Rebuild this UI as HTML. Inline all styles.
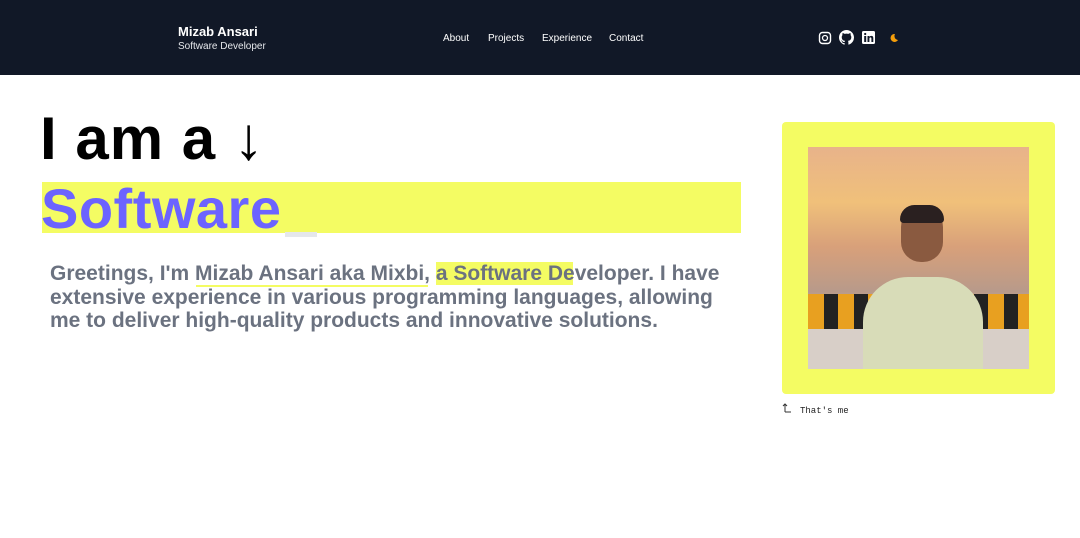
<!DOCTYPE html>
<html><head><meta charset="utf-8"><style>
*{margin:0;padding:0;box-sizing:border-box}
body{width:1080px;height:538px;background:#fff;font-family:"Liberation Sans",sans-serif;position:relative;overflow:hidden}
nav{position:absolute;left:0;top:0;width:1080px;height:75px;background:#111827;color:#fff}
.abs{position:absolute}
</style></head><body>
<nav>
 <div class="abs" style="left:178px;top:24px;font-weight:bold;font-size:13px">Mizab Ansari</div>
 <div class="abs" style="left:178px;top:41px;font-size:10px;color:#e5e7eb">Software Developer</div>
 <div class="abs" style="left:443px;top:33px;font-size:10px">About</div>
 <div class="abs" style="left:488px;top:33px;font-size:10px">Projects</div>
 <div class="abs" style="left:542px;top:33px;font-size:10px">Experience</div>
 <div class="abs" style="left:609px;top:33px;font-size:10px">Contact</div>
 <svg class="abs" style="left:818px;top:31px" width="14" height="14" viewBox="0 0 14 14"><rect x="1.5" y="1.5" width="11" height="11" rx="3" fill="none" stroke="#fff" stroke-width="1.4"/><circle cx="7" cy="7" r="2.5" fill="none" stroke="#fff" stroke-width="1.3"/></svg>
 <svg class="abs" style="left:839px;top:30px" width="15" height="15" viewBox="0 0 16 16"><path fill="#fff" d="M8 0C3.58 0 0 3.58 0 8c0 3.540 2.29 6.53 5.47 7.59.4.07.55-.17.55-.38v-1.33c-2.230.48-2.7-1.07-2.7-1.07-.36-.92-.89-1.17-.89-1.17-.73-.5.06-.49.06-.49.8.06 1.23.83 1.23.83.72 1.22 1.87.87 2.33.66.07-.52.28-.87.51-1.07-1.78-.2-3.64-.89-3.64-3.95 0-.87.31-1.59.82-2.150-.08-.2-.36-1.02.08-2.12 0 0 .67-.21 2.2.82a7.6 7.6 0 0 1 4 0c1.53-1.04 2.2-.82 2.2-.82.44 1.1.16 1.92.08 2.12.51.56.82 1.27.82 2.15 0 3.07-1.87 3.75-3.65 3.95.29.25.54.73.54 1.48v2.2c0 .21.15.46.55.38A8 8 0 0 0 16 8c0-4.42-3.58-8-8-8z"/></svg>
 <svg class="abs" style="left:862px;top:31px" width="13" height="13" viewBox="0 0 13 13"><rect width="13" height="13" rx="1.5" fill="#fff"/><rect x="2.2" y="5" width="2" height="6" fill="#111827"/><circle cx="3.2" cy="3" r="1.1" fill="#111827"/><path d="M5.5 5h1.9v1c.4-.7 1.1-1.1 2-1.1 1.4 0 1.9.9 1.9 2.4V11H9.4V7.7c0-.8-.2-1.3-.9-1.3-.8 0-1.1.6-1.1 1.3V11H5.5z" fill="#111827"/></svg>
 <svg class="abs" style="left:889px;top:33px" width="10" height="10" viewBox="0 0 10 10"><path d="M6 1a4 4 0 1 0 3 6A4 4 0 0 1 6 1z" fill="#f59e0b"/></svg>
</nav>
<div class="abs" style="left:40px;top:104px;font-size:60px;font-weight:bold;color:#000;letter-spacing:1px">I am a <span style="font-weight:normal">↓</span></div>
<div class="abs" style="left:42px;top:182px;width:699px;height:51px;background:#f4fc63"></div>
<div class="abs" style="left:41px;top:176px;font-size:56px;font-weight:bold;color:#6c63ff;letter-spacing:0.5px">Software</div>
<div class="abs" style="left:285px;top:232px;width:32px;height:5px;background:#e5e7eb"></div>
<div class="abs" style="left:436px;top:262px;width:137px;height:23px;background:#f4fc63"></div>
<div class="abs" style="left:196px;top:285px;width:232px;height:2px;background:#f4fc63"></div>
<div class="abs" style="left:50px;top:262px;width:690px;font-size:21px;font-weight:bold;color:#6b7280;line-height:23.5px">Greetings, I'm Mizab Ansari aka Mixbi, a Software Developer. I have extensive experience in various programming languages, allowing me to deliver high-quality products and innovative solutions.</div>
<div class="abs" style="left:782px;top:122px;width:273px;height:272px;background:#f4fc63;border-radius:4px"></div>
<div class="abs" style="left:808px;top:147px;width:221px;height:222px;overflow:hidden;background:linear-gradient(180deg,#e8b38a 0%,#f0c07a 25%,#d8a07a 45%,#b89a8a 65%,#c8b0a0 80%,#d0c8c0 100%)">
 <div class="abs" style="left:0;top:147px;width:221px;height:35px;background:repeating-linear-gradient(90deg,#e8a020 0 16px,#222 16px 30px)"></div>
 <div class="abs" style="left:0;top:182px;width:221px;height:40px;background:#d8cfc8"></div>
 <div class="abs" style="left:55px;top:130px;width:120px;height:100px;border-radius:45px 45px 0 0;background:#d8dcb8"></div>
 <div class="abs" style="left:93px;top:60px;width:42px;height:55px;border-radius:20px;background:#8a5a40"></div>
 <div class="abs" style="left:92px;top:58px;width:44px;height:18px;border-radius:20px 20px 5px 5px;background:#2a2020"></div>
</div>
<svg class="abs" style="left:782px;top:403px" width="10" height="10" viewBox="0 0 10 10"><path d="M3 9V1M1 3l2-2 2 2M3 9h6" fill="none" stroke="#333" stroke-width="1"/></svg>
<div class="abs" style="left:800px;top:406px;font-family:'Liberation Mono',monospace;font-size:9px;color:#222">That's me</div>
</body></html>
